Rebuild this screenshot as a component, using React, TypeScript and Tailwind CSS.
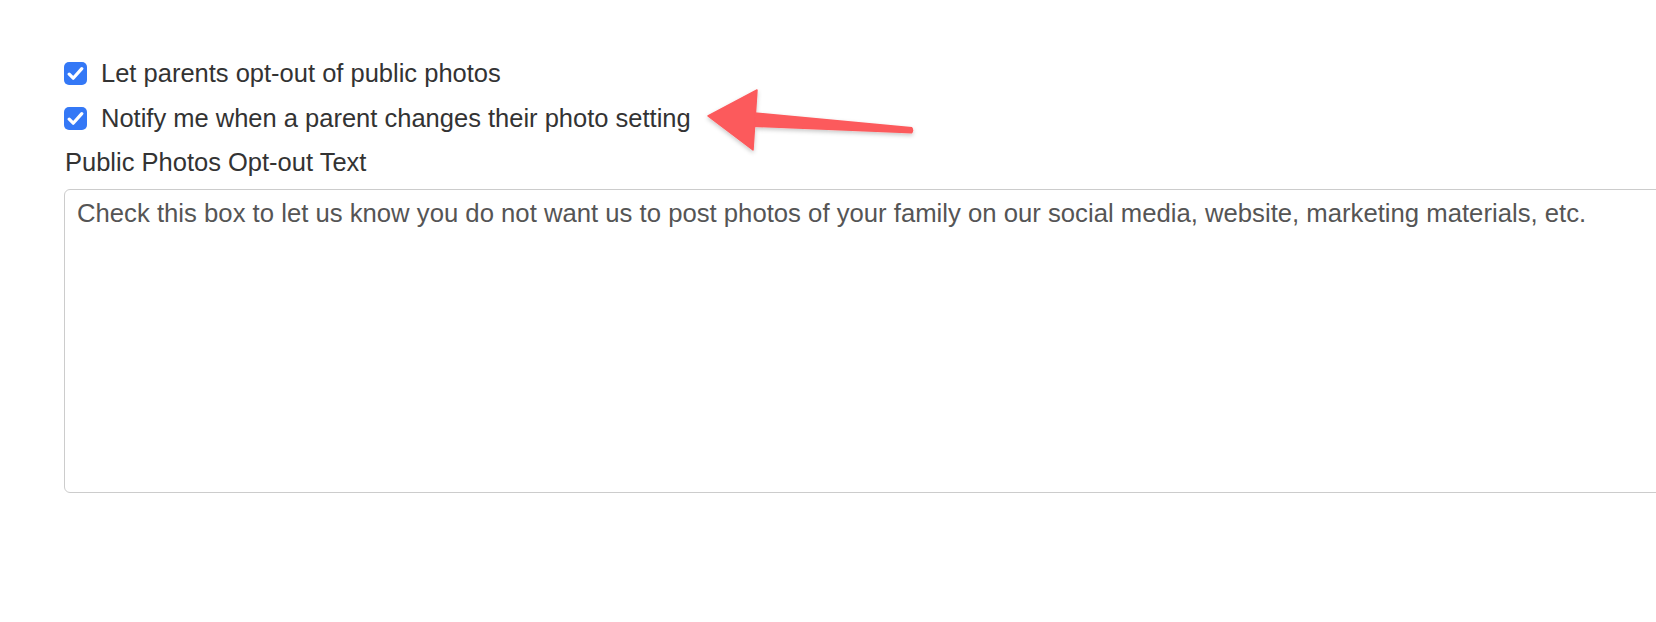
import React from "react";

const Checkbox = () => (
  <span className="flex h-[23px] w-[23px] shrink-0 items-center justify-center rounded-[5px] bg-[#3478f6]">
    <svg width="17" height="15" viewBox="0 0 17 15" fill="none">
      <path d="M2.2 8.2l4 4L14.8 2.6" stroke="#fff" strokeWidth="3.2" strokeLinecap="round" strokeLinejoin="round" />
    </svg>
  </span>
);

const CheckRow = ({ label }: { label: string }) => (
  <label className="flex h-[45px] items-center gap-[14px] pt-[2px]">
    <Checkbox />
    <span className="text-[#333]">{label}</span>
  </label>
);

export default function App() {
  return (
    <div className="relative min-h-[622px] w-full overflow-hidden bg-white font-['Liberation_Sans',Arial,sans-serif] text-[25.5px] leading-[45px]">
      <div className="pl-[64px] pt-[50px]">
        <CheckRow label="Let parents opt-out of public photos" />
        <CheckRow label="Notify me when a parent changes their photo setting" />
        <div className="h-[45px] pl-px text-[#333]">Public Photos Opt-out Text</div>
        <textarea
          readOnly
          className="mt-[4px] block h-[304px] w-[1640px] resize-none rounded-[6px] border border-[#cccccc] px-[12px] pt-[9px] text-[25.7px] leading-[1.15] text-[#555] outline-none"
          defaultValue="Check this box to let us know you do not want us to post photos of your family on our social media, website, marketing materials, etc."
        />
      </div>

      {/* annotation arrow */}
      <svg
        className="pointer-events-none absolute left-[690px] top-[80px]"
        width="240"
        height="90"
        viewBox="0 0 240 90"
      >
        <defs>
          <filter id="sh" x="-20%" y="-30%" width="140%" height="170%">
            <feDropShadow dx="0" dy="2" stdDeviation="2" floodColor="#000" floodOpacity="0.22" />
          </filter>
        </defs>
        <g filter="url(#sh)" fill="#fc5a5c">
          <path d="M62 32 L222 47 Q224.5 50 222 53.5 L62 47 Z" />
          <path d="M18 36 L67 10 L63 70 Z" strokeLinejoin="round" stroke="#fc5a5c" strokeWidth="1.5" />
        </g>
      </svg>
    </div>
  );
}
